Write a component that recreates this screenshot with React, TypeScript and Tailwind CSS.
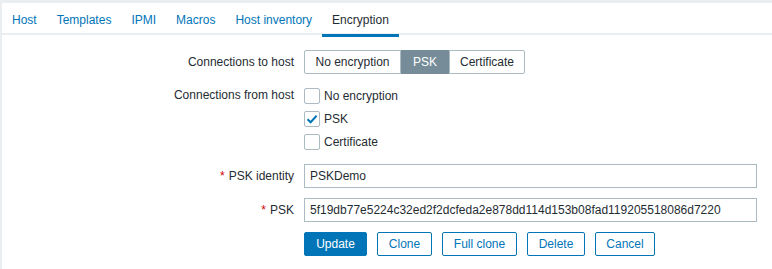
import React from "react";

const tabs = ["Host", "Templates", "IPMI", "Macros", "Host inventory", "Encryption"];

function Label({ text, required }: { text: string; required?: boolean }) {
  return (
    <div className="w-[302px] shrink-0 text-right pr-[10px] h-[24px] leading-[24px]">
      {required && <span className="text-[#d40000] mr-[4px]">*</span>}
      {text}
    </div>
  );
}

function Check({ label, checked }: { label: string; checked?: boolean }) {
  return (
    <div className="flex items-center h-[23px]">
      <span className="w-[16px] h-[16px] border border-[#acbbc2] rounded-[2px] bg-white flex items-center justify-center">
        {checked && (
          <svg width="12" height="12" viewBox="0 0 12 12">
            <path d="M1.5 6.2 L4.6 9.2 L10.6 2.8" fill="none" stroke="#0275b8" strokeWidth="2" />
          </svg>
        )}
      </span>
      <span className="ml-[4px]">{label}</span>
    </div>
  );
}

function Btn({ text, primary, w }: { text: string; primary?: boolean; w: string }) {
  return (
    <button
      className={`${w} h-[24px] rounded-[2px] border border-[#0275b8] ${
        primary ? "bg-[#0275b8] text-white" : "bg-white text-[#0275b8]"
      }`}
    >
      {text}
    </button>
  );
}

export default function App() {
  return (
    <div
      className="w-[772px] h-[269px] bg-[#ebeef0] pt-[3px] pl-[2px] text-[12px] text-[#1f2c33]"
      style={{ fontFamily: '"Liberation Sans", Arial, sans-serif' }}
    >
      <div className="bg-white h-full">
        <div className="flex h-[32px] border-b-2 border-[#ebeef0]">
          {tabs.map((t) => (
            <div
              key={t}
              className={`px-[10px] pt-[3px] ${
                t === "Encryption"
                  ? "text-[#1f2c33] border-b-[3px] border-[#0275b8] h-[34px] leading-[28px]"
                  : "text-[#0275b8] h-[32px] leading-[28px]"
              }`}
            >
              {t}
            </div>
          ))}
        </div>

        <div className="flex flex-col pt-[15px]">
          <div className="flex">
            <Label text="Connections to host" />
            <div className="flex h-[24px]">
              <div className="w-[97px] border border-[#acbbc2] rounded-l-[2px] flex items-center justify-center">
                No encryption
              </div>
              <div className="w-[48px] bg-[#768d99] text-white flex items-center justify-center">PSK</div>
              <div className="w-[76px] border border-[#acbbc2] rounded-r-[2px] flex items-center justify-center">
                Certificate
              </div>
            </div>
          </div>

          <div className="flex mt-[10px]">
            <div className="w-[302px] shrink-0 text-right pr-[10px] h-[23px] leading-[23px]">
              Connections from host
            </div>
            <div className="flex flex-col">
              <Check label="No encryption" />
              <Check label="PSK" checked />
              <Check label="Certificate" />
            </div>
          </div>

          <div className="flex mt-[11px]">
            <Label text="PSK identity" required />
            <div className="w-[453px] h-[24px] border border-[#acbbc2] px-[5px] leading-[22px]">PSKDemo</div>
          </div>

          <div className="flex mt-[10px]">
            <Label text="PSK" required />
            <div className="w-[453px] h-[24px] border border-[#acbbc2] px-[5px] leading-[22px]">
              5f19db77e5224c32ed2f2dcfeda2e878dd114d153b08fad119205518086d7220
            </div>
          </div>

          <div className="flex mt-[10px]">
            <div className="w-[302px] shrink-0" />
            <div className="flex gap-[10px]">
              <Btn text="Update" primary w="w-[63px]" />
              <Btn text="Clone" w="w-[55px]" />
              <Btn text="Full clone" w="w-[75px]" />
              <Btn text="Delete" w="w-[58px]" />
              <Btn text="Cancel" w="w-[60px]" />
            </div>
          </div>
        </div>
      </div>
    </div>
  );
}
